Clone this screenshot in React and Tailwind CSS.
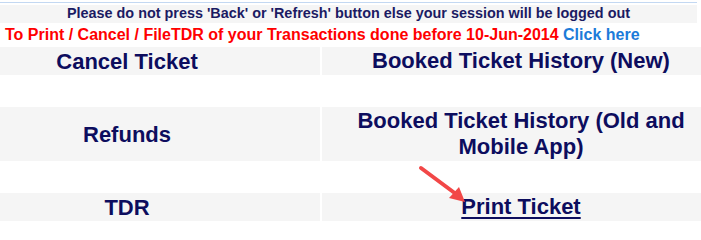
const rows = [
  { left: 'Cancel Ticket', right: 'Booked Ticket History (New)', h: 'h-[28px]' },
  { left: 'Refunds', right: 'Booked Ticket History (Old and Mobile App)', h: 'h-[54px]' },
  { left: 'TDR', right: 'Print Ticket', h: 'h-[28px]', link: true },
];

function Arrow() {
  return (
    <svg className="absolute left-[410px] top-[160px]" width="70" height="50" viewBox="0 0 70 50">
      <line x1="11" y1="8" x2="46" y2="34" stroke="#f24747" strokeWidth="4" strokeLinecap="round" />
      <polygon points="55,42 39,38 49,27" fill="#f24747" />
    </svg>
  );
}

export default function App() {
  return (
    <div className="relative w-[701px] h-[234px] bg-white overflow-hidden font-['Liberation_Sans',Arial,sans-serif]">
      {/* Header strip */}
      <div className="pt-[2px] w-[697px]">
        <div className="h-px bg-[#c3d8f2]" />
        <div className="mt-[2px] h-[18px] bg-[#f5f5f5] flex items-center justify-center text-[14.4px] font-bold text-[#1b1b63]">
          Please do not press 'Back' or 'Refresh' button else your session will be logged out
        </div>
      </div>

      <div className="h-[24px] flex items-center pl-[5px] text-[16px] font-bold text-[#ff0000]">
        To Print / Cancel / FileTDR of your Transactions done before 10-Jun-2014&nbsp;
        <span className="text-[#1c7bd9]">Click here</span>
      </div>

      {/* Options table */}
      <div className="flex flex-col">
        {rows.map((r, i) => (
          <div key={r.left}>
            {i > 0 && <div className="h-[32px]" />}
            <div className={`flex gap-[2px] ${r.h}`}>
              <div className="w-[320px] shrink-0 bg-[#f5f5f5] flex items-center justify-center pr-[66px] text-[22px] leading-[25px] font-bold text-[#0d0d5e]">
                {r.left}
              </div>
              <div className="flex-1 bg-[#f5f5f5] flex items-center justify-center pl-[19px] text-center text-[22px] leading-[26px] font-bold text-[#0d0d5e]">
                {r.link ? <a href="#" className="underline underline-offset-[3px]">{r.right}</a> : r.right}
              </div>
            </div>
          </div>
        ))}
      </div>

      <Arrow />
    </div>
  );
}
